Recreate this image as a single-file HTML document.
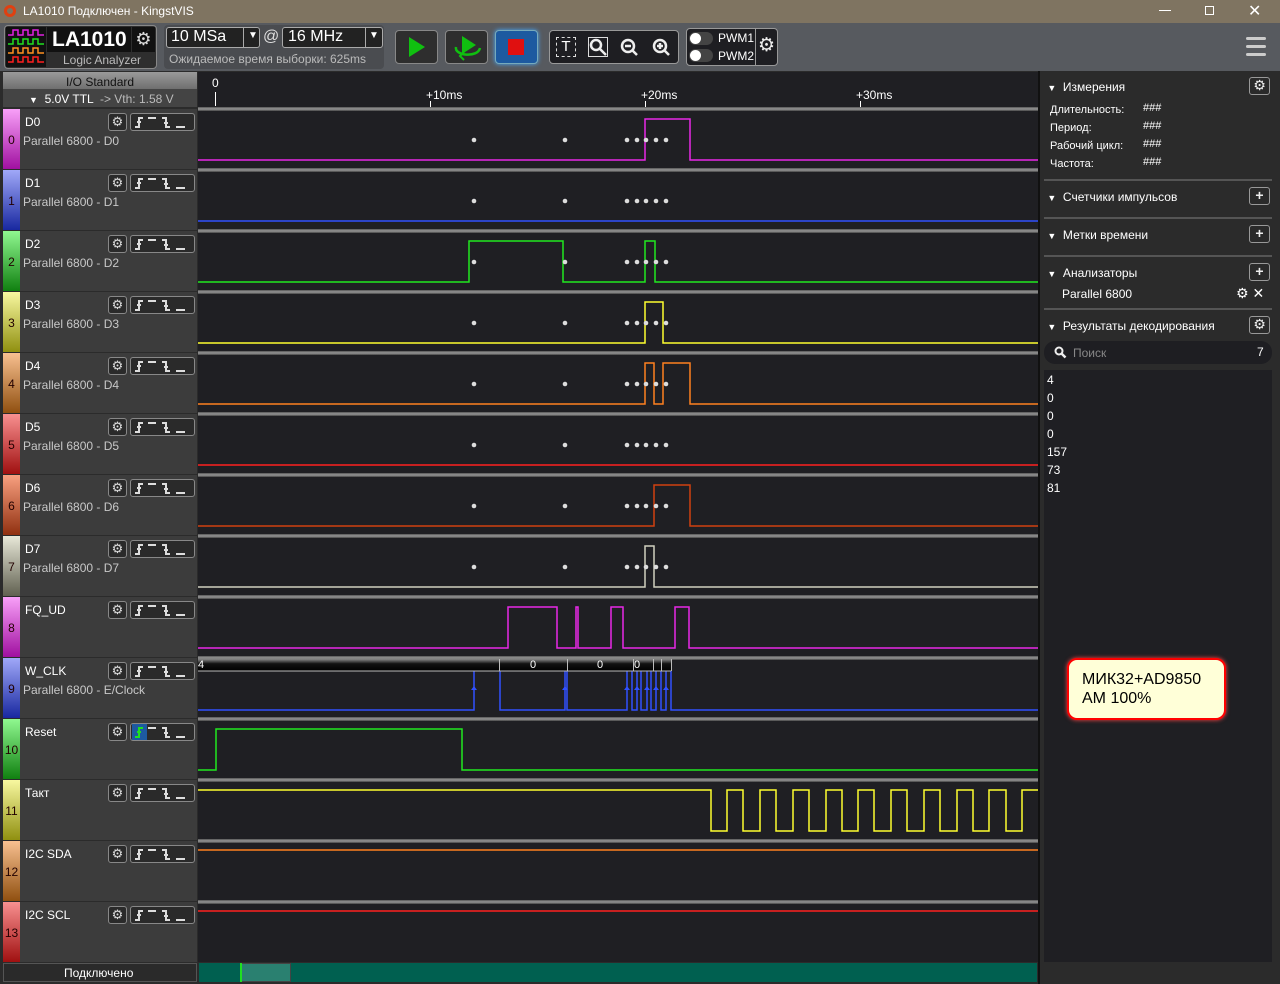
<!DOCTYPE html>
<html><head><meta charset="utf-8">
<style>
*{margin:0;padding:0;box-sizing:border-box}
body{width:1280px;height:984px;overflow:hidden;background:#1f1f23;font-family:"Liberation Sans","DejaVu Sans",sans-serif;color:#fff;position:relative}
.a{position:absolute}
.t{font-size:12px;white-space:nowrap}
.row{position:absolute;left:3px;width:194px;height:60px;background:#3c3c3c}
.strip{position:absolute;left:0;top:0;width:17px;height:60px}
.strip span{position:absolute;left:0;width:17px;text-align:center;top:24px;font-size:12px;color:#200}
.nm{position:absolute;left:22px;top:6px;font-size:12px;color:#fff}
.sub{position:absolute;left:20px;top:25px;font-size:12px;color:#c8c8c8}
.gb{position:absolute;left:105px;top:4px;width:19px;height:18px;border:1px solid #888;border-radius:3px;background:#2a2a2a;color:#ddd;font-size:13px;line-height:15px;text-align:center}
.eb{position:absolute;left:127px;top:4px;width:65px;height:18px;border:1px solid #888;border-radius:3px;background:#2a2a2a}
.eb svg{position:absolute;left:0;top:0}
.rp{position:absolute;left:1044px;width:228px;font-size:12px}
.sec{position:absolute;left:1044px;width:228px;height:2px;background:#555}
.pb{position:absolute;left:1249px;width:21px;height:18px;border:1px solid #999;border-radius:3px;background:#2a2a2a;color:#eee;text-align:center;font-size:14px;line-height:15px;font-weight:bold}
</style></head><body>
<svg width="0" height="0" style="position:absolute"><defs><g id="edg" fill="none" stroke="#ddd" stroke-width="2"><path d="M4,13H8V4H12M6,8H10"/><path d="M17,4H25"/><path d="M31,4H35V13H39M33,9H37"/><path d="M45,13H54"/></g></defs></svg>
<!-- title bar -->
<div class="a" style="left:0;top:0;width:1280px;height:23px;background:#7f7461"></div>
<div class="a" style="left:4px;top:5px;width:12px;height:12px;border-radius:50%;border:3px solid #e04010"></div>
<div class="a t" style="left:23px;top:4px;font-size:12px">LA1010 Подключен - KingstVIS</div>
<div class="a" style="left:1159px;top:10px;width:12px;height:1px;background:#fff"></div>
<div class="a" style="left:1205px;top:6px;width:9px;height:9px;border:1px solid #fff"></div>
<div class="a t" style="left:1248px;top:1px;font-size:16px">✕</div>
<!-- toolbar -->
<div class="a" style="left:0;top:23px;width:1280px;height:48px;background:#575a5f"></div>
<div class="a" style="left:4px;top:25px;width:153px;height:44px;border:1px solid #888;border-radius:4px;background:#2e2e2e"></div>
<div class="a" style="left:6px;top:27px;width:40px;height:40px;background:#111"></div>
<svg class="a" style="left:6px;top:27px" width="40" height="40"><g fill="none" stroke-width="1.5"><path d="M2,8H7V3H12V8H17V3H22V8H27V3H32V8H38" stroke="#e020e0"/><path d="M2,17H7V12H12V17H17V12H22V17H27V12H32V17H38" stroke="#20e020"/><path d="M2,26H7V21H12V26H17V21H22V26H27V21H32V26H38" stroke="#ff9020"/><path d="M2,35H7V30H12V35H17V30H22V35H27V30H32V35H38" stroke="#ff2020"/></g></svg>
<div class="a" style="left:47px;top:27px;width:84px;height:25px;background:#111"></div>
<div class="a t" style="left:52px;top:28px;font-size:21px;font-weight:bold">LA1010</div>
<div class="a" style="left:132px;top:27px;width:23px;height:25px;background:#111;color:#ddd;text-align:center;font-size:18px;line-height:24px">⚙</div>
<div class="a t" style="left:63px;top:53px;color:#bbb;font-size:12px">Logic Analyzer</div>
<div class="a" style="left:164px;top:25px;width:220px;height:44px;background:#4a4c50;border-radius:4px"></div>
<div class="a" style="left:166px;top:27px;width:94px;height:21px;border:1px solid #aaa;border-radius:3px;background:#222"></div>
<div class="a t" style="left:171px;top:28px;font-size:16px">10 MSa</div>
<div class="a" style="left:243px;top:28px;width:1px;height:19px;background:#aaa"></div>
<div class="a t" style="left:248px;top:30px;font-size:10px">▼</div>
<div class="a t" style="left:263px;top:28px;font-size:16px;color:#ddd">@</div>
<div class="a" style="left:282px;top:27px;width:101px;height:21px;border:1px solid #aaa;border-radius:3px;background:#222"></div>
<div class="a t" style="left:288px;top:28px;font-size:16px">16 MHz</div>
<div class="a" style="left:365px;top:28px;width:1px;height:19px;background:#aaa"></div>
<div class="a t" style="left:369px;top:30px;font-size:10px">▼</div>
<div class="a t" style="left:169px;top:52px;color:#bbb;font-size:12px">Ожидаемое время выборки: 625ms</div>
<div class="a" style="left:395px;top:30px;width:43px;height:34px;border:1px solid #888;border-radius:4px;background:#2e2e2e"></div>
<svg class="a" style="left:408px;top:36px" width="18" height="22"><path d="M1,1L17,11L1,21Z" fill="#10c010"/></svg>
<div class="a" style="left:445px;top:30px;width:43px;height:34px;border:1px solid #888;border-radius:4px;background:#2e2e2e"></div>
<svg class="a" style="left:450px;top:32px" width="34" height="30"><path d="M12,4L26,13L12,22Z" fill="#10c010"/><path d="M6,15C4,24 28,26 30,16" fill="none" stroke="#10c010" stroke-width="2.5"/><path d="M14,20l-4,4l4,4" fill="none" stroke="#10c010" stroke-width="2"/></svg>
<div class="a" style="left:495px;top:30px;width:43px;height:34px;border:1px solid #7ab;border-radius:4px;background:#1d5aa0;box-shadow:0 0 5px #4af"></div>
<div class="a" style="left:508px;top:39px;width:16px;height:16px;background:#e01010"></div>
<div class="a" style="left:549px;top:30px;width:130px;height:34px;border:1px solid #999;border-radius:4px;background:#1e1e22"></div>
<div class="a" style="left:556px;top:37px;width:20px;height:20px;border:1px dashed #ddd;color:#fff;text-align:center;font-size:15px;line-height:18px">T</div>
<div class="a" style="left:588px;top:37px;width:20px;height:20px;border:1.5px solid #ddd"></div>
<svg class="a" style="left:588px;top:37px" width="90" height="22"><g fill="none" stroke="#eee" stroke-width="2.5"><circle cx="8" cy="8" r="5"/><path d="M12,12l6,6"/><circle cx="40" cy="9" r="6"/><path d="M37,9h6M44,13l5,5"/><circle cx="72" cy="9" r="6"/><path d="M69,9h6M72,6v6M76,13l5,5"/></g></svg>
<div class="a" style="left:686px;top:28px;width:92px;height:38px;border:1px solid #999;border-radius:4px;background:#1e1e22"></div>
<div class="a" style="left:689px;top:32px;width:24px;height:13px;border-radius:7px;background:#444"></div>
<div class="a" style="left:690px;top:33px;width:11px;height:11px;border-radius:50%;background:#fff"></div>
<div class="a" style="left:689px;top:49px;width:24px;height:13px;border-radius:7px;background:#444"></div>
<div class="a" style="left:690px;top:50px;width:11px;height:11px;border-radius:50%;background:#fff"></div>
<div class="a t" style="left:718px;top:31px">PWM1</div>
<div class="a t" style="left:718px;top:49px">PWM2</div>
<div class="a" style="left:755px;top:28px;width:1px;height:38px;background:#999"></div>
<div class="a t" style="left:758px;top:34px;font-size:19px;color:#eee">⚙</div>
<div class="a" style="left:1246px;top:37px;width:20px;height:3px;border-radius:2px;background:#ccc"></div>
<div class="a" style="left:1246px;top:45px;width:20px;height:3px;border-radius:2px;background:#ccc"></div>
<div class="a" style="left:1246px;top:53px;width:20px;height:3px;border-radius:2px;background:#ccc"></div>
<!-- left header -->
<div class="a" style="left:0;top:71px;width:1040px;height:913px;background:#2b2b2b"></div>
<div class="a" style="left:3px;top:72px;width:194px;height:17px;background:linear-gradient(#9a9a9a,#6f6f6f)"></div>
<div class="a t" style="left:66px;top:75px;color:#111">I/O Standard</div>
<div class="a" style="left:3px;top:89px;width:194px;height:18px;background:#444"></div>
<div class="a t" style="left:29px;top:92px;color:#fff"><span style="font-size:9px">▼</span>&nbsp; 5.0V TTL <span style="color:#bbb">&nbsp;-&gt; Vth: 1.58 V</span></div>
<!-- waveform area bg -->
<div class="a" style="left:198px;top:72px;width:840px;height:890px;background:#1f1f23"></div>
<div class="a t" style="left:212px;top:76px">0</div>
<div class="a t" style="left:426px;top:88px">+10ms</div>
<div class="a t" style="left:641px;top:88px">+20ms</div>
<div class="a t" style="left:856px;top:88px">+30ms</div>
<div class="a" style="left:215px;top:92px;width:1px;height:14px;background:#fff"></div>
<div class="a" style="left:430px;top:101px;width:1px;height:6px;background:#fff"></div>
<div class="a" style="left:645px;top:101px;width:1px;height:6px;background:#fff"></div>
<div class="a" style="left:860px;top:101px;width:1px;height:6px;background:#fff"></div>

<!-- rows left -->
<div class="row" style="top:109px"><div class="strip" style="background:linear-gradient(#f8a0f8,#a010a0)"><span>0</span></div><div class="nm">D0</div><div class="sub">Parallel 6800 - D0</div><div class="gb">⚙</div><div class="eb"><svg width="63" height="16"><use href="#edg"/></svg></div></div>
<div class="row" style="top:170px"><div class="strip" style="background:linear-gradient(#a0a8f8,#1828a0)"><span>1</span></div><div class="nm">D1</div><div class="sub">Parallel 6800 - D1</div><div class="gb">⚙</div><div class="eb"><svg width="63" height="16"><use href="#edg"/></svg></div></div>
<div class="row" style="top:231px"><div class="strip" style="background:linear-gradient(#90f890,#108010)"><span>2</span></div><div class="nm">D2</div><div class="sub">Parallel 6800 - D2</div><div class="gb">⚙</div><div class="eb"><svg width="63" height="16"><use href="#edg"/></svg></div></div>
<div class="row" style="top:292px"><div class="strip" style="background:linear-gradient(#f8f8a0,#909010)"><span>3</span></div><div class="nm">D3</div><div class="sub">Parallel 6800 - D3</div><div class="gb">⚙</div><div class="eb"><svg width="63" height="16"><use href="#edg"/></svg></div></div>
<div class="row" style="top:353px"><div class="strip" style="background:linear-gradient(#f8c090,#905010)"><span>4</span></div><div class="nm">D4</div><div class="sub">Parallel 6800 - D4</div><div class="gb">⚙</div><div class="eb"><svg width="63" height="16"><use href="#edg"/></svg></div></div>
<div class="row" style="top:414px"><div class="strip" style="background:linear-gradient(#f89090,#a01010)"><span>5</span></div><div class="nm">D5</div><div class="sub">Parallel 6800 - D5</div><div class="gb">⚙</div><div class="eb"><svg width="63" height="16"><use href="#edg"/></svg></div></div>
<div class="row" style="top:475px"><div class="strip" style="background:linear-gradient(#f8a080,#903010)"><span>6</span></div><div class="nm">D6</div><div class="sub">Parallel 6800 - D6</div><div class="gb">⚙</div><div class="eb"><svg width="63" height="16"><use href="#edg"/></svg></div></div>
<div class="row" style="top:536px"><div class="strip" style="background:linear-gradient(#e8e8d8,#606050)"><span>7</span></div><div class="nm">D7</div><div class="sub">Parallel 6800 - D7</div><div class="gb">⚙</div><div class="eb"><svg width="63" height="16"><use href="#edg"/></svg></div></div>
<div class="row" style="top:597px"><div class="strip" style="background:linear-gradient(#f8a0f8,#a010a0)"><span>8</span></div><div class="nm">FQ_UD</div><div class="gb">⚙</div><div class="eb"><svg width="63" height="16"><use href="#edg"/></svg></div></div>
<div class="row" style="top:658px"><div class="strip" style="background:linear-gradient(#a0a8f8,#1828a0)"><span>9</span></div><div class="nm">W_CLK</div><div class="sub">Parallel 6800 - E/Clock</div><div class="gb">⚙</div><div class="eb"><svg width="63" height="16"><use href="#edg"/></svg></div></div>
<div class="row" style="top:719px"><div class="strip" style="background:linear-gradient(#90f890,#108010)"><span>10</span></div><div class="nm">Reset</div><div class="gb">⚙</div><div class="eb"><svg width="63" height="16"><rect x="1" y="0" width="15" height="16" fill="#1d5aa0"/><use href="#edg"/><path d="M4,13H8V4H12M6,8H10" fill="none" stroke="#20e020" stroke-width="2"/></svg></div></div>
<div class="row" style="top:780px"><div class="strip" style="background:linear-gradient(#f8f8a0,#909010)"><span>11</span></div><div class="nm">Такт</div><div class="gb">⚙</div><div class="eb"><svg width="63" height="16"><use href="#edg"/></svg></div></div>
<div class="row" style="top:841px"><div class="strip" style="background:linear-gradient(#f8c090,#905010)"><span>12</span></div><div class="nm">I2C SDA</div><div class="gb">⚙</div><div class="eb"><svg width="63" height="16"><use href="#edg"/></svg></div></div>
<div class="row" style="top:902px"><div class="strip" style="background:linear-gradient(#f89090,#a01010)"><span>13</span></div><div class="nm">I2C SCL</div><div class="gb">⚙</div><div class="eb"><svg width="63" height="16"><use href="#edg"/></svg></div></div>

<!-- waveforms -->
<svg class="a" style="left:0;top:0" width="1280" height="984">
<defs><linearGradient id="sep" x1="0" y1="0" x2="0" y2="1"><stop offset="0" stop-color="#555"/><stop offset=".5" stop-color="#999"/><stop offset="1" stop-color="#444"/></linearGradient>
<linearGradient id="dec" x1="0" y1="0" x2="0" y2="1"><stop offset="0" stop-color="#888"/><stop offset=".4" stop-color="#111"/><stop offset="1" stop-color="#000"/></linearGradient></defs>
<g fill="url(#sep)">
<rect x="198" y="107" width="840" height="4"/><rect x="198" y="168" width="840" height="4"/><rect x="198" y="229" width="840" height="4"/><rect x="198" y="290" width="840" height="4"/><rect x="198" y="351" width="840" height="4"/><rect x="198" y="412" width="840" height="4"/><rect x="198" y="473" width="840" height="4"/><rect x="198" y="534" width="840" height="4"/><rect x="198" y="595" width="840" height="4"/><rect x="198" y="656" width="840" height="4"/><rect x="198" y="717" width="840" height="4"/><rect x="198" y="778" width="840" height="4"/><rect x="198" y="839" width="840" height="4"/><rect x="198" y="900" width="840" height="4"/></g>
<g fill="none" stroke-width="1.5">
<path d="M198,160H645V119H690V160H1038" stroke="#e828e8"/>
<path d="M198,221H1038" stroke="#3050ff"/>
<path d="M198,282H469V241H563V282H645V241H655V282H1038" stroke="#20e820"/>
<path d="M198,343H645V302H663V343H1038" stroke="#ffff30"/>
<path d="M198,404H645V363H654V404H663V363H690V404H1038" stroke="#ff8020"/>
<path d="M198,465H1038" stroke="#ff2020"/>
<path d="M198,526H654V485H690V526H1038" stroke="#d04010"/>
<path d="M198,587H645V546H654V587H1038" stroke="#d0d0c0"/>
<path d="M198,648H508V607H557V648H576V607H578V648H611V607H623V648H675V607H689V648H1038" stroke="#e828e8"/>
<path d="M198,710H474V667H500V710H565V667H567V710H627V667H632V710H637V667H641V710H647V667H651V710H656V667H661V710H666V667H671V710H1038" stroke="#3050ff"/>
<path d="M198,770H216V729H462V770H1038" stroke="#20e820"/>
<path d="M198,790H711V831H727V790H743V831H760V790H776V831H793V790H809V831H826V790H842V831H858V790H874V831H891V790H907V831H924V790H940V831H957V790H973V831H989V790H1006V831H1022V790H1038" stroke="#ffff30"/>
<path d="M198,850H1038" stroke="#ff8020"/>
<path d="M198,911H1038" stroke="#ff2020"/>
</g>
<rect x="198" y="659" width="473" height="12" fill="url(#dec)"/>
<path d="M198,671H671" stroke="#bbb" stroke-width="1"/>
<g stroke="#bbb" stroke-width="1"><path d="M499.5,659V671M567.5,659V671M633.5,659V671M653.5,659V671M661.5,659V671M671.5,659V671"/></g>
<g fill="#fff" font-size="11" font-family="Liberation Sans"><text x="198" y="668">4</text><text x="530" y="668">0</text><text x="597" y="668">0</text><text x="634" y="668">0</text></g>
<g fill="#3050ff"><path d="M474,686l-3,4h6z M565,686l-3,4h6z M627,686l-3,4h6z M637,686l-3,4h6z M647,686l-3,4h6z M656,686l-3,4h6z M666,686l-3,4h6z"/></g>
<g fill="#ddd">
<g id="dots"><circle cx="474" cy="140" r="2.3"/><circle cx="565" cy="140" r="2.3"/><circle cx="627" cy="140" r="2.3"/><circle cx="637" cy="140" r="2.3"/><circle cx="646" cy="140" r="2.3"/><circle cx="656" cy="140" r="2.3"/><circle cx="666" cy="140" r="2.3"/></g>
<use href="#dots" y="61"/><use href="#dots" y="122"/><use href="#dots" y="183"/><use href="#dots" y="244"/><use href="#dots" y="305"/><use href="#dots" y="366"/><use href="#dots" y="427"/>
</g>
</svg>
<!-- status bar -->
<div class="a" style="left:3px;top:963px;width:194px;height:19px;background:#2a2a2a;border:1px solid #555"></div>
<div class="a t" style="left:64px;top:966px">Подключено</div>
<div class="a" style="left:199px;top:963px;width:838px;height:19px;background:#006050"></div>
<div class="a" style="left:240px;top:963px;width:51px;height:19px;background:#2a8070;border:1px solid #444"></div>
<div class="a" style="left:240px;top:963px;width:2px;height:19px;background:#20e020"></div>
<!-- right panel -->
<div class="a" style="left:1040px;top:71px;width:240px;height:913px;background:#2b2b2b"></div>
<div class="a" style="left:1038px;top:71px;width:2px;height:913px;background:#111"></div>
<div class="rp" style="top:80px">&nbsp;<span style="font-size:9px">▼</span>&nbsp; Измерения</div>
<div class="pb" style="top:77px">⚙</div>
<div class="rp" style="top:104px;left:1050px;font-size:11px">Длительность:</div><div class="rp" style="top:102px;left:1143px;font-size:11px">###</div>
<div class="rp" style="top:122px;left:1050px;font-size:11px">Период:</div><div class="rp" style="top:120px;left:1143px;font-size:11px">###</div>
<div class="rp" style="top:140px;left:1050px;font-size:11px">Рабочий цикл:</div><div class="rp" style="top:138px;left:1143px;font-size:11px">###</div>
<div class="rp" style="top:158px;left:1050px;font-size:11px">Частота:</div><div class="rp" style="top:156px;left:1143px;font-size:11px">###</div>
<div class="sec" style="top:179px"></div>
<div class="rp" style="top:190px">&nbsp;<span style="font-size:9px">▼</span>&nbsp; Счетчики импульсов</div><div class="pb" style="top:187px">+</div>
<div class="sec" style="top:217px"></div>
<div class="rp" style="top:228px">&nbsp;<span style="font-size:9px">▼</span>&nbsp; Метки времени</div><div class="pb" style="top:225px">+</div>
<div class="sec" style="top:255px"></div>
<div class="rp" style="top:266px">&nbsp;<span style="font-size:9px">▼</span>&nbsp; Анализаторы</div><div class="pb" style="top:263px">+</div>
<div class="rp" style="top:287px;left:1062px">Parallel 6800</div>
<div class="rp" style="top:285px;left:1236px;font-size:14px;width:40px">⚙ ✕</div>
<div class="sec" style="top:308px"></div>
<div class="rp" style="top:319px">&nbsp;<span style="font-size:9px">▼</span>&nbsp; Результаты декодирования</div><div class="pb" style="top:316px">⚙</div>
<div class="a" style="left:1044px;top:341px;width:228px;height:23px;border-radius:11px;background:#1e1e22"></div>
<svg class="a" style="left:1054px;top:346px" width="14" height="14"><circle cx="5" cy="5" r="3.5" fill="none" stroke="#eee" stroke-width="2"/><path d="M7.5,7.5l4,4" stroke="#eee" stroke-width="2.5"/></svg>
<div class="a t" style="left:1073px;top:346px;color:#888">Поиск</div>
<div class="a t" style="left:1257px;top:345px">7</div>
<div class="a" style="left:1044px;top:370px;width:228px;height:592px;background:#1f1f23"></div>
<div class="a" style="left:1047px;top:371px;font-size:12px;line-height:18px">4<br>0<br>0<br>0<br>157<br>73<br>81</div>
<div class="a" style="left:1067px;top:658px;width:159px;height:62px;background:#ffffd8;border:2px solid #f00;border-radius:10px;box-shadow:0 0 4px #f44"></div>
<div class="a" style="left:1082px;top:670px;color:#000;font-size:16px;line-height:19px">МИК32+AD9850<br>AM 100%</div>
</body></html>
